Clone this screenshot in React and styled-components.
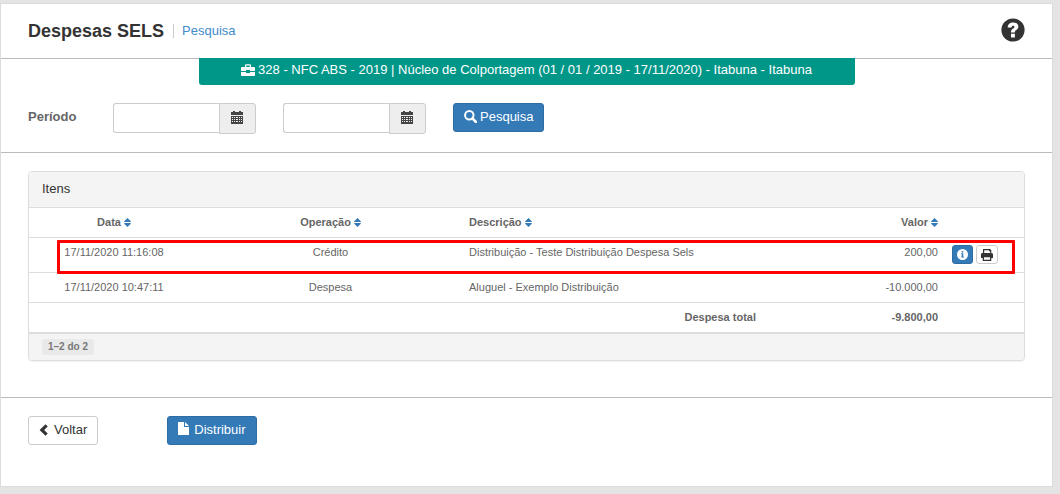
import React from 'react'
import styled, { createGlobalStyle, css } from 'styled-components'

const GlobalStyle = createGlobalStyle`
* {
  box-sizing: border-box;
}
body {
  margin: 0;
  background-color: #e4e4e4;
  color: #333;
  font-family: "Liberation Sans", Arial, sans-serif;
  font-size: 13px;
  line-height: 19px;
}
`;

const Card = styled.main`
  margin: 3px 7px 7px 0;
  background-color: #fff;
  border: 1px solid #dcdcdc;
`;

const Header = styled.header`
  display: flex;
  align-items: center;
  height: 54px;
  padding: 0 27px;
`;

const Title = styled.h1`
  margin: 0;
  font-size: 18px;
  line-height: 24px;
`;

const Crumb = styled.a`
  margin-left: 9px;
  padding-left: 8px;
  border-left: 1px solid #ccc;
  color: #428bca;
  line-height: 14px;
  text-decoration: none;
`;

const HelpButton = styled.button`
  display: flex;
  margin-left: auto;
  padding: 0 0 2px;
  border: 0;
  background: none;
  color: #333;
  cursor: pointer;
`;

const Filters = styled.section`
  border-top: 1px solid #bbb;
  border-bottom: 1px solid #bbb;
`;

const Banner = styled.div`
  display: flex;
  justify-content: center;
  align-items: center;
  gap: 3px;
  width: 656px;
  max-width: 100%;
  margin: -1px auto 0;
  padding: 2px 12px 6px;
  border-radius: 0 0 3px 3px;
  background-color: #009688;
  color: #fff;
`;

const Form = styled.form`
  display: flex;
  align-items: flex-start;
  gap: 27px;
  padding: 18px 27px;
`;

const Label = styled.label`
  width: 58px;
  padding-top: 4px;
  color: #666;
  font-weight: bold;
`;

const InputGroup = styled.div`
  display: flex;
  width: 143px;
`;

const Input = styled.input`
  flex: 1;
  min-width: 0;
  height: 30px;
  padding: 4px 8px;
  border: 1px solid #ccc;
  border-right: 0;
  border-radius: 3px 0 0 3px;
  font: inherit;
`;

const Addon = styled.button`
  display: flex;
  justify-content: center;
  align-items: center;
  width: 37px;
  height: 31px;
  padding: 0 2px 2px 0;
  border: 1px solid #ccc;
  border-radius: 0 3px 3px 0;
  background-color: #eee;
  color: #444;
  cursor: pointer;
`;

const Button = styled.button`
  display: inline-flex;
  justify-content: center;
  align-items: center;
  gap: ${({ $gap }) => $gap || 3}px;
  height: ${({ $small }) => ($small ? 19 : 29)}px;
  padding: ${({ $small }) => ($small ? '0 4px' : '0 10px 2px')};
  border: 1px solid #ccc;
  border-radius: 3px;
  background-color: #fff;
  color: #333;
  font: inherit;
  cursor: pointer;
  ${({ $primary }) => $primary && css`
    border-color: #2e6da4;
    background-color: #337ab7;
    color: #fff;
  `}
`;

const Content = styled.section`
  padding: 18px 27px 36px;
`;

const Panel = styled.div`
  border: 1px solid #ddd;
  border-radius: 4px;
  box-shadow: 0 1px 1px rgba(0, 0, 0, 0.05);
  overflow: hidden;
`;

const PanelTitle = styled.h2`
  margin: 0;
  padding: 7px 13px 9px;
  background-color: #f4f4f4;
  font-size: 13px;
  font-weight: normal;
`;

const Table = styled.table`
  width: 100%;
  border-collapse: separate;
  border-spacing: 0;
  table-layout: fixed;
  border-bottom: 1px solid #ddd;
  color: #666;
  font-size: 11px;
  line-height: 15px;
`;

const Col = styled.col`
  width: ${({ $width }) => $width};
`;

const Row = styled.tr`
  position: relative;
`;

const cell = css`
  padding: 7px;
  border-top: 1px solid #ddd;
  text-align: ${({ $align }) => $align || 'left'};
  vertical-align: top;
`;

const Th = styled.th`
  ${cell}
`;

const Td = styled.td`
  ${cell}
`;

const SortButton = styled.button`
  display: inline-flex;
  align-items: center;
  gap: 3px;
  padding: 0;
  border: 0;
  background: none;
  color: inherit;
  font: inherit;
  vertical-align: top;
  cursor: pointer;

  svg {
    color: #337ab7;
  }
`;

const Actions = styled.div`
  display: flex;
  gap: 3px;
  padding-bottom: 1px;
`;

const Highlight = styled.span`
  position: absolute;
  z-index: 1;
  top: 3px;
  right: 9px;
  bottom: -2px;
  left: 28px;
  border: 3px solid #f00;
  border-radius: 1px;
  pointer-events: none;
`;

const PanelFooter = styled.div`
  display: flex;
  padding: 5px 13px;
  border-top: 1px solid #ddd;
  background-color: #f4f4f4;
`;

const Badge = styled.span`
  padding: 0 6px;
  border-radius: 3px;
  background-color: #e9e9e9;
  color: #777;
  font-size: 10px;
  font-weight: bold;
  line-height: 16px;
`;

const Footer = styled.footer`
  display: flex;
  gap: 69px;
  padding: 18px 27px 41px;
  border-top: 1px solid #bbb;
`;

const Icon = ({ width, height, children }) => (
  <svg
    width={width}
    height={height}
    viewBox={`0 0 ${width} ${height}`}
    fill="currentColor"
    fillRule="evenodd"
    aria-hidden="true"
  >
    {children}
  </svg>
)

const HelpIcon = () => (
  <Icon width={24} height={24}>
    <path d="M12 .4a11.6 11.6 0 1 1 0 23.2a11.6 11.6 0 0 1 0-23.2zM6.7 9.6h3.9c0-1.2.5-1.8 1.5-1.8c.8 0 1.3.4 1.3 1.1c0 .6-.4 1-1.3 1.7c-1.5 1.1-2.2 2-2.2 3.9h3.9c0-1 .3-1.5 1.5-2.4c1.3-1 2.1-2 2.1-3.5c0-2.8-2.2-4.2-5.1-4.2c-3.4 0-5.5 1.9-5.6 5.2zM10 15.8v3.8h3.9v-3.8z" />
  </Icon>
)

const BriefcaseIcon = () => (
  <Icon width={14} height={12}>
    <path d="M4 3V1.5C4 .7 4.6.2 5.3.2h3.4c.7 0 1.3.5 1.3 1.3V3h2.800C13.500 3 14 3.500 14 4.200V7H9V6H5v1H0V4.200C0 3.500.5 3 1.200 3zM5.200 3h3.600V1.500H5.200zM0 8h5v1h4V8h5v3c0 .6-.4 1-1 1H1c-.6 0-1-.4-1-1z" />
  </Icon>
)

const CalendarIcon = () => (
  <Icon width={12} height={13}>
    <path d="M0 1h2V0h2v1h4V0h2v1h2v3H0zM0 5h12v8H0zM1 6v1h1V6zM3 6v1h1V6zM5 6v1h2V6zM8 6v1h1V6zM10 6v1h1V6zM1 8v1h1V8zM3 8v1h1V8zM5 8v1h2V8zM8 8v1h1V8zM10 8v1h1V8zM1 10v1h1v-1zM3 10v1h1v-1zM5 10v1h2v-1zM8 10v1h1v-1zM10 10v1h1v-1z" />
  </Icon>
)

const SearchIcon = () => (
  <Icon width={13} height={13}>
    <circle cx="5.300" cy="5.300" r="4.200" fill="none" stroke="currentColor" strokeWidth="2" />
    <path d="M8.400 8.400L12 12" stroke="currentColor" strokeWidth="2.600" strokeLinecap="round" />
  </Icon>
)

const SortIcon = () => (
  <Icon width={7} height={9}>
    <path d="M3.500 0L6.800 3.200V4H.2v-.8zM.2 5h6.600v.8L3.500 9L.2 5.800z" />
  </Icon>
)

const InfoIcon = () => (
  <Icon width={11} height={11}>
    <path d="M5.500 0a5.500 5.500 0 1 1 0 11a5.500 5.500 0 0 1 0-11zM4.700 2v1.400h1.600V2zM4 4.300v.8h.7v2.600H4v.9h3v-.9h-.7V4.300z" />
  </Icon>
)

const PrintIcon = () => (
  <Icon width={12} height={12}>
    <path d="M2 0h7l1.300 1.300V4.500H2zM3.200 1.200v3.300h5.900V2.200H8v-1zM1.500 4h9C11.400 4 12 4.600 12 5.500V9h-1.700v3H1.700V9H0V5.500C0 4.600.6 4 1.500 4zM3 8.300v2.400h6V8.300z" />
    <path d="M2 4h8v3H2z" />
  </Icon>
)

const ChevronIcon = () => (
  <Icon width={9} height={12}>
    <path d="M6.500.3L8.700 2.500L5.100 6l3.600 3.500l-2.200 2.200L.6 6z" />
  </Icon>
)

const FileIcon = () => (
  <Icon width={11} height={15}>
    <path d="M0 0h6v5h5v8H0zM7 0l4 4H7z" />
  </Icon>
)

const columns = [
  { name: 'Data', align: 'center' },
  { name: 'Operação', align: 'center' },
  { name: 'Descrição', align: 'left' },
  { name: 'Valor', align: 'right' },
]

const items = [
  {
    date: '17/11/2020 11:16:08',
    operation: 'Crédito',
    description: 'Distribuição - Teste Distribuição Despesa Sels',
    value: '200,00',
    highlighted: true,
  },
  {
    date: '17/11/2020 10:47:11',
    operation: 'Despesa',
    description: 'Aluguel - Exemplo Distribuição',
    value: '-10.000,00',
  },
]

const DateField = ({ id, label }) => (
  <InputGroup>
    <Input id={id} type="text" aria-label={label} />
    <Addon type="button" aria-label="Abrir calendário">
      <CalendarIcon />
    </Addon>
  </InputGroup>
)

const App = () => {
  return (
    <>
      <GlobalStyle />
      <Card>
        <Header>
          <Title>Despesas SELS</Title>
          <Crumb href="#pesquisa">Pesquisa</Crumb>
          <HelpButton type="button" aria-label="Ajuda">
            <HelpIcon />
          </HelpButton>
        </Header>
        <Filters>
          <Banner>
            <BriefcaseIcon />
            328 - NFC ABS - 2019 | Núcleo de Colportagem (01 / 01 / 2019 - 17/11/2020) - Itabuna - Itabuna
          </Banner>
          <Form onSubmit={(e) => e.preventDefault()}>
            <Label htmlFor="inicio">Período</Label>
            <DateField id="inicio" label="Período, início" />
            <DateField id="fim" label="Período, fim" />
            <Button type="submit" $primary>
              <SearchIcon />
              Pesquisa
            </Button>
          </Form>
        </Filters>
        <Content>
          <Panel>
            <PanelTitle>Itens</PanelTitle>
            <Table>
              <colgroup>
                <Col $width="170px" />
                <Col $width="263px" />
                <Col $width="auto" />
                <Col $width="182px" />
                <Col $width="79px" />
              </colgroup>
              <thead>
                <tr>
                  {columns.map(({ name, align }) => (
                    <Th key={name} scope="col" $align={align}>
                      <SortButton type="button">
                        {name}
                        <SortIcon />
                      </SortButton>
                    </Th>
                  ))}
                  <Td />
                </tr>
              </thead>
              <tbody>
                {items.map((item) => (
                  <Row key={item.date}>
                    <Td $align="center">
                      {item.date}
                      {item.highlighted && <Highlight />}
                    </Td>
                    <Td $align="center">{item.operation}</Td>
                    <Td>{item.description}</Td>
                    <Td $align="right">{item.value}</Td>
                    <Td>
                      {item.highlighted && (
                        <Actions>
                          <Button type="button" aria-label="Detalhes" $small $primary>
                            <InfoIcon />
                          </Button>
                          <Button type="button" aria-label="Imprimir" $small>
                            <PrintIcon />
                          </Button>
                        </Actions>
                      )}
                    </Td>
                  </Row>
                ))}
              </tbody>
              <tfoot>
                <tr>
                  <Th scope="row" colSpan={3} $align="right">Despesa total</Th>
                  <Td $align="right"><b>-9.800,00</b></Td>
                  <Td />
                </tr>
              </tfoot>
            </Table>
            <PanelFooter>
              <Badge>1–2 do 2</Badge>
            </PanelFooter>
          </Panel>
        </Content>
        <Footer>
          <Button type="button" $gap={6}>
            <ChevronIcon />
            Voltar
          </Button>
          <Button type="button" $gap={5} $primary>
            <FileIcon />
            Distribuir
          </Button>
        </Footer>
      </Card>
    </>
  )
}

export default App
